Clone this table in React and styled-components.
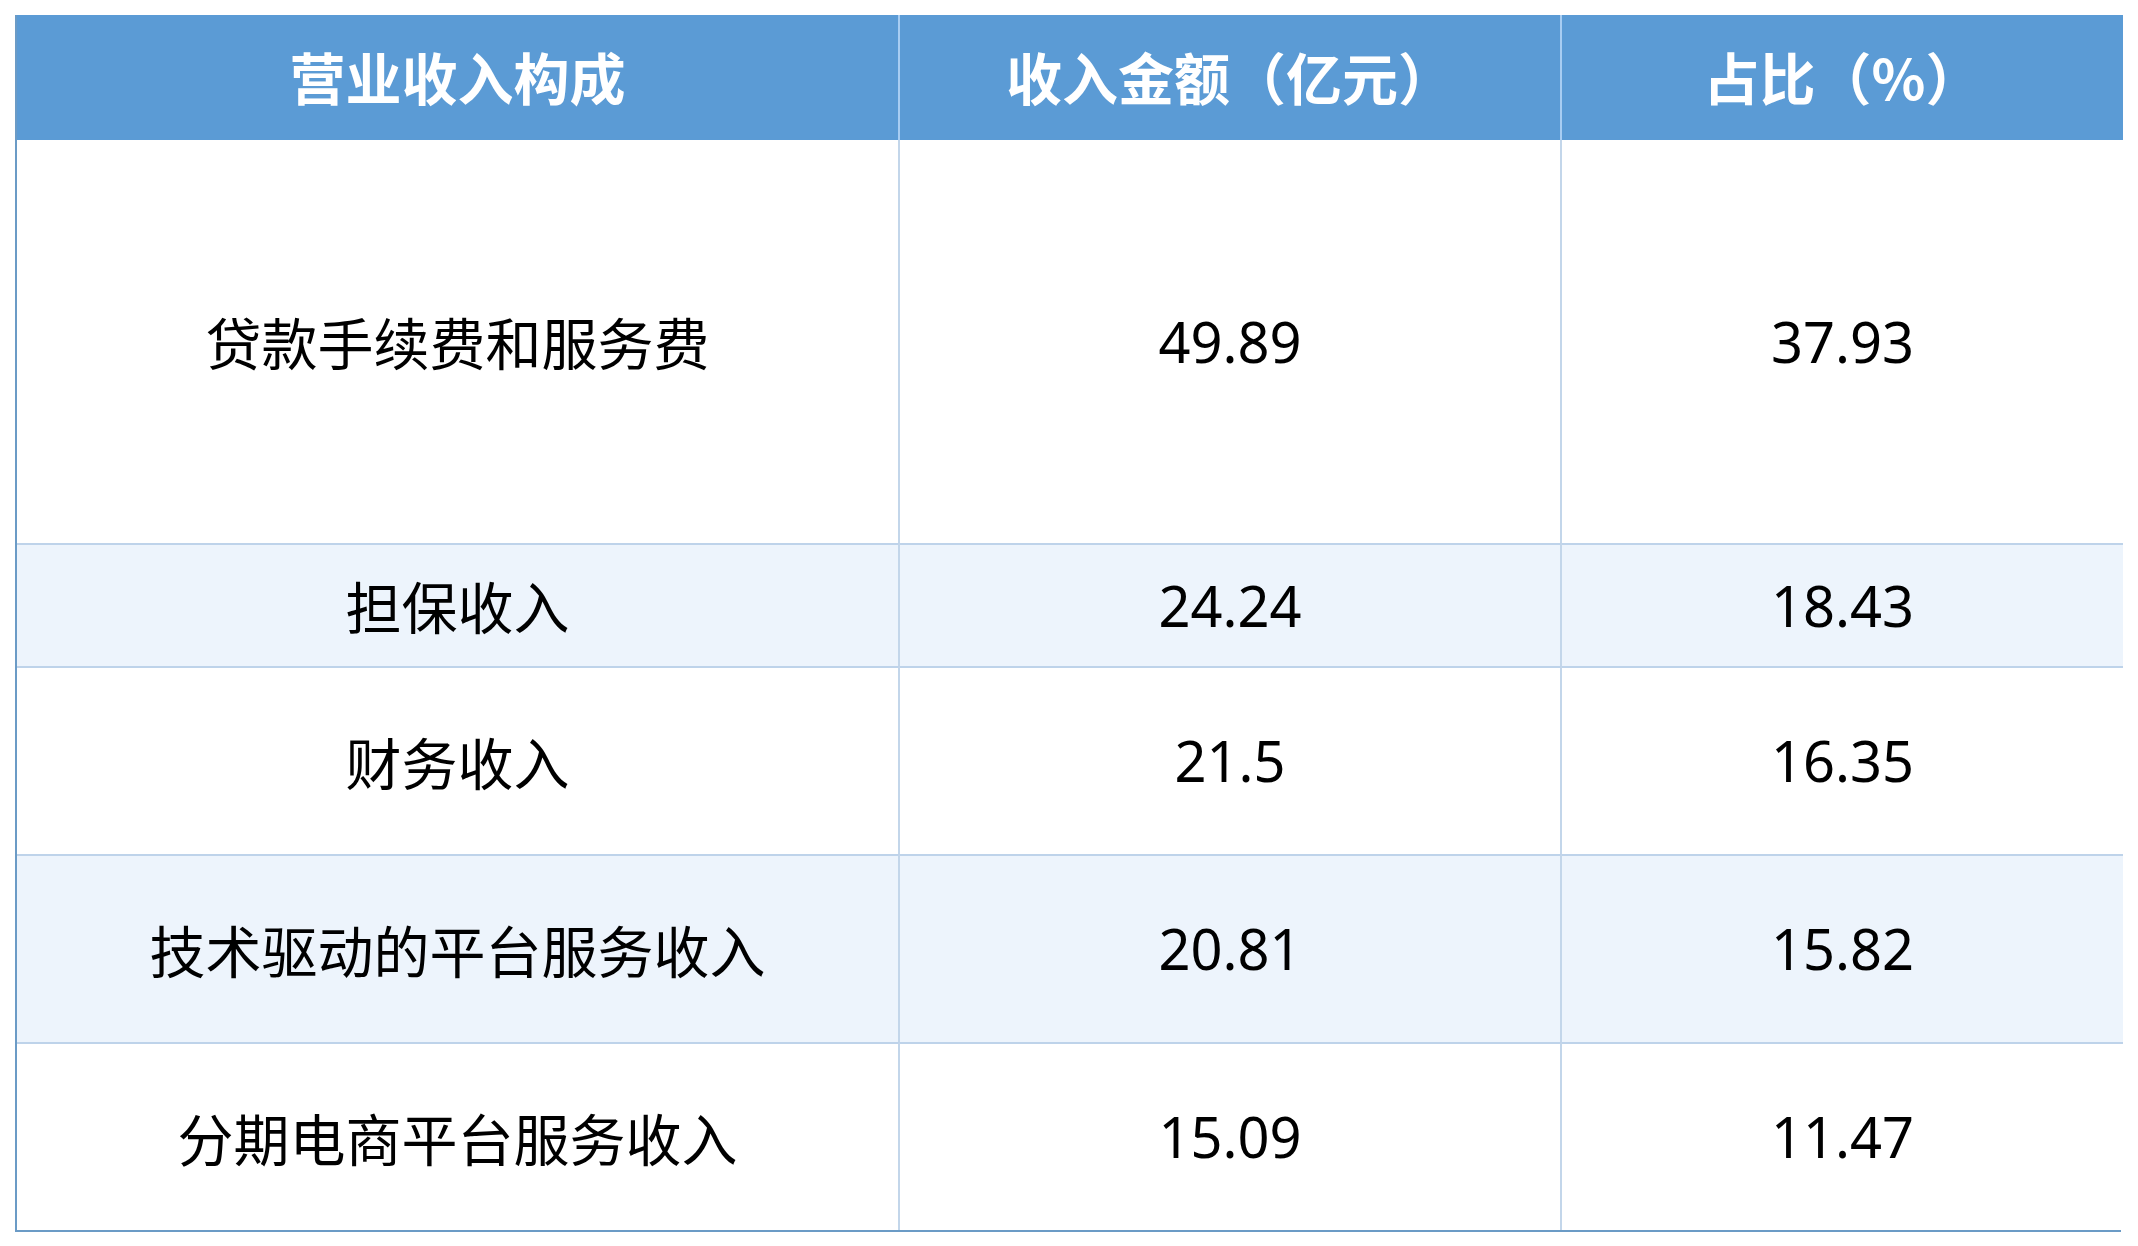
import React from "react";
import styled, { createGlobalStyle } from "styled-components";

const Global = createGlobalStyle`
  html, body { margin: 0; padding: 0; background: #ffffff; }
  body { font-family: "Noto Sans", "Noto Sans CJK SC", sans-serif; }
`;

const Page = styled.div`
  padding: 15px 16px 0 15px;
  width: 2138px;
  height: 1246px;
  box-sizing: border-box;
`;

const Table = styled.div`
  display: grid;
  grid-template-columns: 883px 662px 561px;
  grid-template-rows: 125px 403px 123px 188px 188px 188px;
  width: 2106px;
  box-sizing: border-box;
  border-left: 2px solid #6b9bc6;
  border-right: 2px solid #6b9bc6;
  border-bottom: 2px solid #6b9bc6;
`;

const HeadCell = styled.div`
  display: flex;
  align-items: center;
  justify-content: center;
  background: #5b9bd5;
  color: #ffffff;
  font-family: "Noto Sans CJK SC", sans-serif;
  font-weight: 700;
  font-size: 56px;
  border-right: ${(p) => (p.$last ? "none" : "2px solid #a8cdf2")};
  box-sizing: border-box;
  padding-bottom: 4px;
`;

const Cell = styled.div`
  display: flex;
  align-items: center;
  justify-content: center;
  background: ${(p) => (p.$alt ? "#edf4fc" : "#ffffff")};
  color: #000000;
  font-family: "Noto Sans", "Noto Sans CJK SC", sans-serif;
  font-size: 56px;
  border-right: ${(p) => (p.$last ? "none" : "2px solid #c3d6ea")};
  border-top: ${(p) => (p.$first ? "none" : "2px solid #bed3ea")};
  box-sizing: border-box;
  padding-bottom: 2px;
`;

const Label = styled.span`
  font-family: "Noto Sans CJK SC", sans-serif;
`;

const rows = [
  ["贷款手续费和服务费", "49.89", "37.93"],
  ["担保收入", "24.24", "18.43"],
  ["财务收入", "21.5", "16.35"],
  ["技术驱动的平台服务收入", "20.81", "15.82"],
  ["分期电商平台服务收入", "15.09", "11.47"],
];

export default function App() {
  return (
    <>
      <Global />
      <Page>
        <Table>
          <HeadCell>营业收入构成</HeadCell>
          <HeadCell>收入金额（亿元）</HeadCell>
          <HeadCell $last>占比（%）</HeadCell>
          {rows.map((r, i) => (
            <React.Fragment key={i}>
              <Cell $alt={i % 2 === 1} $first={i === 0}>
                <Label>{r[0]}</Label>
              </Cell>
              <Cell $alt={i % 2 === 1} $first={i === 0}>{r[1]}</Cell>
              <Cell $alt={i % 2 === 1} $first={i === 0} $last>{r[2]}</Cell>
            </React.Fragment>
          ))}
        </Table>
      </Page>
    </>
  );
}
